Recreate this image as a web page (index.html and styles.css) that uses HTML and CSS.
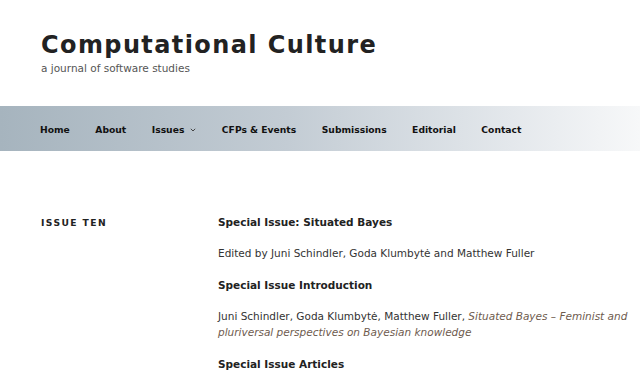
FILE: index.html
```html
<!DOCTYPE html>
<html lang="en">
<head>
<meta charset="utf-8">
<title>Computational Culture</title>
<link rel="stylesheet" href="styles.css">
</head>
<body>
<header class="site-header">
  <h1 class="site-title">Computational Culture</h1>
  <p class="site-tagline">a journal of software studies</p>
</header>
<nav class="main-nav">
  <ul class="nav-list">
    <li class="nav-item">Home</li>
    <li class="nav-item">About</li>
    <li class="nav-item">Issues <svg class="caret" width="6" height="4" viewBox="0 0 6 4"><path d="M0.8 0.8 L3 3 L5.2 0.8" fill="none" stroke="#444" stroke-width="1"/></svg></li>
    <li class="nav-item">CFPs &amp; Events</li>
    <li class="nav-item">Submissions</li>
    <li class="nav-item">Editorial</li>
    <li class="nav-item">Contact</li>
  </ul>
</nav>
<main class="content">
  <aside class="issue-label">ISSUE TEN</aside>
  <section class="issue-body">
    <p class="heading">Special Issue: Situated Bayes</p>
    <p class="text">Edited by Juni Schindler, Goda Klumbytė and Matthew Fuller</p>
    <p class="heading">Special Issue Introduction</p>
    <p class="text">Juni Schindler, Goda Klumbytė, Matthew Fuller, <a class="link">Situated Bayes – Feminist and pluriversal perspectives on Bayesian knowledge</a></p>
    <p class="heading">Special Issue Articles</p>
  </section>
</main>
</body>
</html>
```
FILE: styles.css
```css
* { box-sizing: border-box; }
html, body { margin: 0; padding: 0; background: #fff; }
body {
  font-family: "DejaVu Sans", Verdana, sans-serif;
  color: #333;
  overflow: hidden;
}
.site-header {
  padding: 31px 41px 0;
  height: 106px;
}
.site-title {
  margin: 0;
  font-size: 24px;
  line-height: 28px;
  font-weight: bold;
  letter-spacing: 1.4px;
  color: #222;
}
.site-tagline {
  margin: 2px 0 0;
  font-size: 10.5px;
  line-height: 14px;
  color: #555;
}
.main-nav {
  height: 45px;
  background: linear-gradient(to right, #a6b4be 0%, #c3ccd4 45%, #e4e8ec 80%, #f7f8f9 100%);
  display: flex;
  align-items: center;
  padding: 2px 0 0 40px;
}
.nav-list {
  list-style: none;
  margin: 0;
  padding: 0;
  display: flex;
  gap: 25.5px;
}
.nav-item {
  font-size: 9.2px;
  font-weight: bold;
  color: #111;
  line-height: 14px;
  display: flex;
  align-items: center;
}
.caret {
  margin-left: 6px;
  margin-top: 1px;
}
.content {
  display: grid;
  grid-template-columns: 177px 1fr;
  padding: 63px 12px 0 41px;
}
.issue-label {
  font-size: 9.2px;
  font-weight: bold;
  letter-spacing: 1.4px;
  color: #222;
  line-height: 14px;
  padding-top: 2px;
}
.issue-body p {
  margin: 0 0 15.4px;
  font-size: 10.5px;
  line-height: 16px;
}
.heading { font-weight: bold; color: #222; }
.text { color: #333; }
.link { font-style: italic; color: #6e5b4e; }
```
